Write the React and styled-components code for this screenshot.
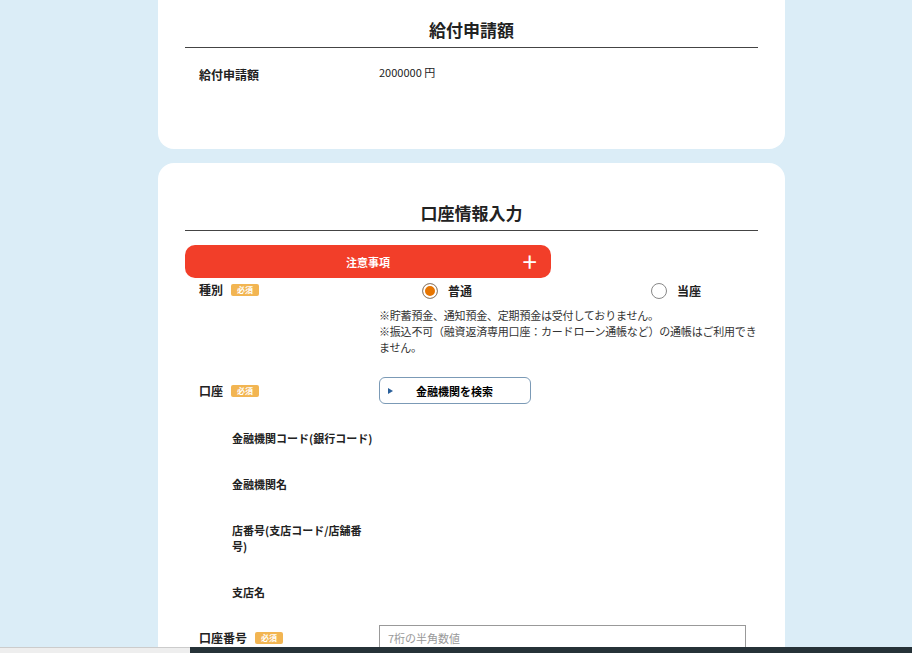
import styled, { createGlobalStyle } from "styled-components"

const Global = createGlobalStyle`
  html, body { margin: 0; padding: 0; background: #dbedf7; overflow: hidden; }
  body { font-family: "Noto Sans CJK JP", "Noto Sans", sans-serif; color: #222; }
`

const Page = styled.div`
  width: 627px;
  margin: -20px auto 0 158px;
  display: flex;
  flex-direction: column;
  gap: 14px;
`

const Card = styled.section`
  background: #fff;
  border-radius: 16px;
  padding: ${p => p.$top}px 27px ${p => p.$bottom}px;
`

const Title = styled.h2`
  margin: 0;
  font-size: 17px;
  font-weight: 700;
  text-align: center;
  line-height: 24px;
  padding-bottom: 5px;
  border-bottom: 1px solid #444;
`

const Row = styled.div`
  display: grid;
  grid-template-columns: 194px 1fr;
  align-items: ${p => p.$align || "start"};
  margin-top: ${p => p.$mt || 0}px;
  font-size: 12px;
`

const Label = styled.div`
  display: flex;
  align-items: center;
  gap: 8px;
  padding-left: ${p => p.$indent || 14}px;
  font-weight: 700;
  font-size: ${p => (p.$indent ? 11 : 12)}px;
  line-height: 16px;
  white-space: ${p => (p.$w ? "normal" : "nowrap")};
  width: ${p => p.$w || "auto"};
`

const Badge = styled.span`
  background: #f2b552;
  color: #fff;
  font-size: 8px;
  font-weight: 700;
  border-radius: 2px;
  padding: 0 6px;
  line-height: 12px;
`

const Value = styled.div`
  font-size: 11px;
  line-height: 16px;
`

const Notice = styled.div`
  width: 366px;
  height: 33px;
  margin-top: 14px;
  background: #f23e29;
  border-radius: 10px;
  color: #fff;
  font-weight: 700;
  font-size: 11px;
  display: flex;
  align-items: center;
  justify-content: center;
  position: relative;
`

const Plus = styled.span`
  position: absolute;
  right: 14px;
  top: 50%;
  transform: translateY(-52%);
  font-size: 26px;
  line-height: 1;
  font-weight: 400;
`

const Radios = styled.div`
  display: flex;
  padding-left: 43px;
`

const Radio = styled.label`
  display: flex;
  align-items: center;
  gap: 10px;
  font-weight: 700;
  font-size: 12px;
  width: ${p => p.$w}px;
`

const Dot = styled.span`
  width: 16px;
  height: 16px;
  border-radius: 50%;
  box-sizing: border-box;
  border: 1px solid #888;
  background: ${p => (p.$on ? "#e77500" : "#fff")};
  box-shadow: ${p => (p.$on ? "inset 0 0 0 2px #fff" : "none")};
`

const Notes = styled.div`
  margin-top: 8px;
  font-size: 11px;
  line-height: 16px;
  color: #333;
  letter-spacing: -0.2px;
`

const SearchBtn = styled.button`
  width: 152px;
  height: 27px;
  border: 1px solid #7b9ab6;
  border-radius: 6px;
  background: #fff;
  font: inherit;
  font-weight: 700;
  font-size: 11px;
  display: flex;
  align-items: center;
  padding: 0 8px;
  gap: 4px;
  &::before {
    content: "";
    border-left: 5px solid #2a5f9a;
    border-top: 3px solid transparent;
    border-bottom: 3px solid transparent;
  }
  span { flex: 1; text-align: center; padding-right: 10px; }
`

const Input = styled.input`
  width: 367px;
  height: 26px;
  border: 1px solid #999;
  box-sizing: border-box;
  padding: 0 8px;
  font: inherit;
  font-size: 11px;
  &::placeholder { color: #999; }
`

const Scroll = styled.div`
  position: fixed;
  left: 0; right: 0; bottom: 0;
  height: 6px;
  display: grid;
  grid-template-columns: 190px 1fr;
  div:first-child { background: #eee; border-top: 1px solid #ccc; }
  div:last-child { background: #263238; }
`

export default function App() {
  return (
    <>
      <Global />
      <Page>
        <Card $top={38} $bottom={66}>
          <Title>給付申請額</Title>
          <Row $mt={16}>
            <Label style={{ paddingTop: 3 }}>給付申請額</Label>
            <Value>2000000 円</Value>
          </Row>
        </Card>
        <Card $top={38} $bottom={40}>
          <Title>口座情報入力</Title>
          <Notice>注意事項<Plus>+</Plus></Notice>
          <Row $mt={4}>
            <Label>種別<Badge>必須</Badge></Label>
            <div>
              <Radios>
                <Radio $w={229}><Dot $on />普通</Radio>
                <Radio $w={80}><Dot />当座</Radio>
              </Radios>
              <Notes>
                ※貯蓄預金、通知預金、定期預金は受付しておりません。<br />
                ※振込不可（融資返済専用口座：カードローン通帳など）の通帳はご利用できません。
              </Notes>
            </div>
          </Row>
          <Row $mt={22} $align="center">
            <Label>口座<Badge>必須</Badge></Label>
            <SearchBtn><span>金融機関を検索</span></SearchBtn>
          </Row>
          <Row $mt={26}><Label $indent={47}>金融機関コード(銀行コード)</Label></Row>
          <Row $mt={30}><Label $indent={47}>金融機関名</Label></Row>
          <Row $mt={30}><Label $indent={47} $w="135px">店番号(支店コード/店舗番号)</Label></Row>
          <Row $mt={30}><Label $indent={47}>支店名</Label></Row>
          <Row $mt={25} $align="center">
            <Label>口座番号<Badge>必須</Badge></Label>
            <Input placeholder="7桁の半角数値" />
          </Row>
        </Card>
      </Page>
      <Scroll><div /><div /></Scroll>
    </>
  )
}
